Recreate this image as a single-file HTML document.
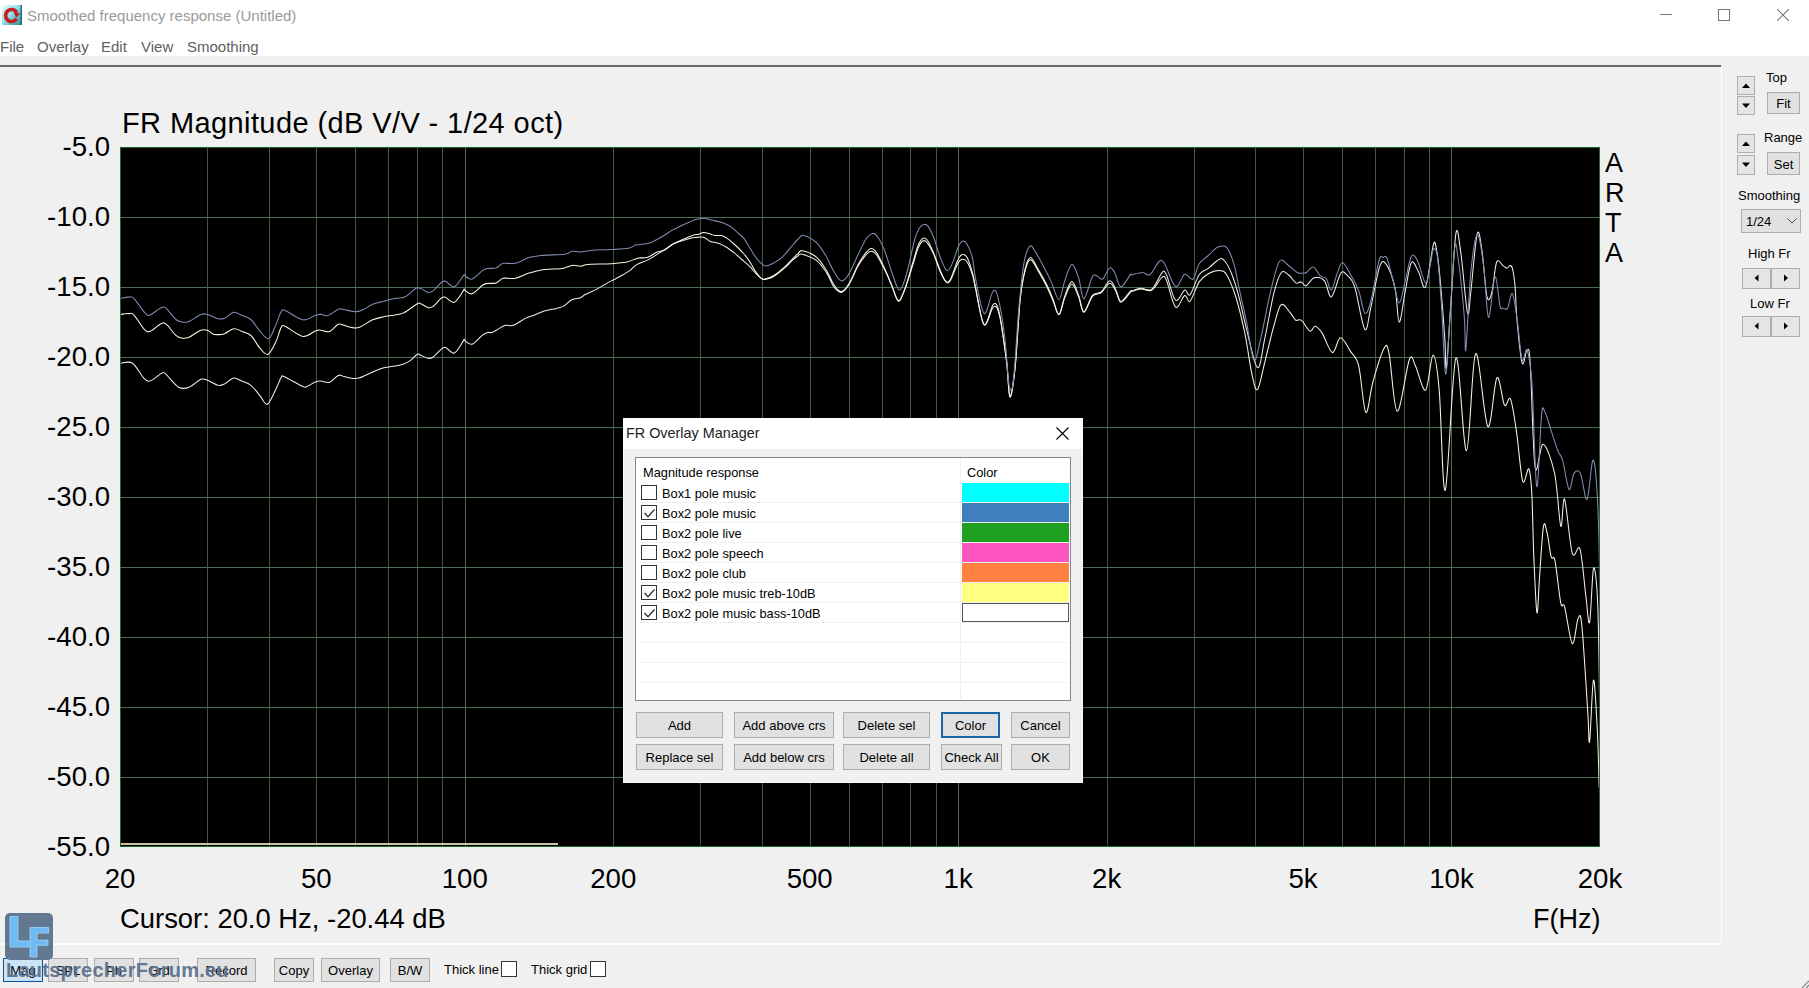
<!DOCTYPE html>
<html><head><meta charset="utf-8">
<style>
*{margin:0;padding:0}
html,body{width:1809px;height:988px;overflow:hidden;background:#f0f0f0;font-family:"Liberation Sans",sans-serif;position:relative}
.a{position:absolute;white-space:pre}
.yl{position:absolute;left:0;width:110px;text-align:right;font-size:27.6px;line-height:28px;color:#000}
.xl{position:absolute;top:865px;width:120px;text-align:center;font-size:27.6px;line-height:28px;color:#000}
.btn{position:absolute;box-sizing:border-box;border:1px solid #adadad;background:#e1e1e1;font-size:13px;color:#000;text-align:center;padding-top:1px}
.cb{position:absolute;width:15px;height:15px;box-sizing:border-box;border:1px solid #333;background:#fff}
.rt{position:absolute;font-size:12.8px;line-height:20px;color:#000;white-space:pre;margin-top:1px}
.menu{position:absolute;top:38px;font-size:15px;line-height:18px;color:#606060}
.spin{position:absolute;box-sizing:border-box;border:1px solid #adadad;background:#e5e5e5;width:18px;height:19px}
.lbl{position:absolute;font-size:13px;line-height:15px;color:#000;white-space:pre}
</style></head><body>
<!-- title bar -->
<div style="position:absolute;left:0;top:0;width:1809px;height:56px;background:#fff"></div>
<svg style="position:absolute;left:2px;top:5px" width="20" height="20" viewBox="0 0 20 20">
<defs><linearGradient id="ig" x1="0" y1="0" x2="1" y2="1"><stop offset="0" stop-color="#f4ffff"/><stop offset="0.45" stop-color="#8fe0e8"/><stop offset="1" stop-color="#2a8c98"/></linearGradient></defs>
<rect x="0" y="0" width="20" height="20" fill="url(#ig)"/>
<rect x="18.5" y="0" width="1.5" height="20" fill="#1f6c78"/>
<path d="M14.6 7.2 A6 6 0 1 0 14.6 13.8" fill="none" stroke="#c81c22" stroke-width="3.6"/>
<path d="M11.5 6 L18 8.5 L14 13 Z" fill="#c81c22"/>
</svg>
<div class="a" style="left:27px;top:7px;font-size:15px;line-height:18px;color:#9a9a9a">Smoothed frequency response (Untitled)</div>
<div style="position:absolute;left:1660px;top:14px;width:12px;height:1px;background:#777"></div>
<div style="position:absolute;left:1718px;top:9px;width:12px;height:12px;box-sizing:border-box;border:1px solid #777"></div>
<svg style="position:absolute;left:1777px;top:9px" width="12" height="12"><path d="M0 0L12 12M12 0L0 12" stroke="#777" stroke-width="1.1"/></svg>
<div class="menu" style="left:0">File</div>
<div class="menu" style="left:37px">Overlay</div>
<div class="menu" style="left:101px">Edit</div>
<div class="menu" style="left:141px">View</div>
<div class="menu" style="left:187px">Smoothing</div>
<div style="position:absolute;left:0;top:65px;width:1721px;height:2px;background:#6a6a6a"></div>
<div style="position:absolute;left:1721px;top:67px;width:1px;height:878px;background:#fff"></div>

<!-- chart -->
<div class="a" style="left:122px;top:105.5px;font-size:29px;line-height:34px;color:#000;letter-spacing:0.4px">FR Magnitude (dB V/V - 1/24 oct)</div>
<div class="yl" style="top:133px">-5.0</div><div class="yl" style="top:203px">-10.0</div><div class="yl" style="top:273px">-15.0</div><div class="yl" style="top:343px">-20.0</div><div class="yl" style="top:413px">-25.0</div><div class="yl" style="top:483px">-30.0</div><div class="yl" style="top:553px">-35.0</div><div class="yl" style="top:623px">-40.0</div><div class="yl" style="top:693px">-45.0</div><div class="yl" style="top:763px">-50.0</div><div class="yl" style="top:833px">-55.0</div>
<div class="xl" style="left:60.0px">20</div><div class="xl" style="left:256.3px">50</div><div class="xl" style="left:404.8px">100</div><div class="xl" style="left:553.3px">200</div><div class="xl" style="left:749.7px">500</div><div class="xl" style="left:898.2px">1k</div><div class="xl" style="left:1046.7px">2k</div><div class="xl" style="left:1243.0px">5k</div><div class="xl" style="left:1391.5px">10k</div><div class="xl" style="left:1540.0px">20k</div>
<svg style="position:absolute;left:119px;top:146px" width="1482" height="702" viewBox="-1 -1 1482 702">
<defs><clipPath id="pc"><rect x="1" y="1" width="1478" height="698"/></clipPath></defs>
<rect x="-1" y="-1" width="1482" height="702" fill="#dcf8e2"/>
<rect x="0" y="0" width="1480" height="700" fill="#2e5a36"/>
<rect x="1" y="1" width="1478" height="698" fill="#000"/>
<g stroke="#2e5a36" stroke-width="1" shape-rendering="crispEdges"><line x1="87.5" y1="0" x2="87.5" y2="700" stroke="#3c5a42"/><line x1="149.5" y1="0" x2="149.5" y2="700" stroke="#3c5a42"/><line x1="196.5" y1="0" x2="196.5" y2="700" stroke="#3c5a42"/><line x1="235.5" y1="0" x2="235.5" y2="700" stroke="#3c5a42"/><line x1="268.5" y1="0" x2="268.5" y2="700" stroke="#3c5a42"/><line x1="297.5" y1="0" x2="297.5" y2="700" stroke="#3c5a42"/><line x1="322.5" y1="0" x2="322.5" y2="700" stroke="#3c5a42"/><line x1="345.5" y1="0" x2="345.5" y2="700" stroke="#4c6c52"/><line x1="493.5" y1="0" x2="493.5" y2="700" stroke="#3c5a42"/><line x1="580.5" y1="0" x2="580.5" y2="700" stroke="#3c5a42"/><line x1="642.5" y1="0" x2="642.5" y2="700" stroke="#3c5a42"/><line x1="690.5" y1="0" x2="690.5" y2="700" stroke="#3c5a42"/><line x1="729.5" y1="0" x2="729.5" y2="700" stroke="#3c5a42"/><line x1="762.5" y1="0" x2="762.5" y2="700" stroke="#3c5a42"/><line x1="790.5" y1="0" x2="790.5" y2="700" stroke="#3c5a42"/><line x1="816.5" y1="0" x2="816.5" y2="700" stroke="#3c5a42"/><line x1="838.5" y1="0" x2="838.5" y2="700" stroke="#4c6c52"/><line x1="987.5" y1="0" x2="987.5" y2="700" stroke="#3c5a42"/><line x1="1074.5" y1="0" x2="1074.5" y2="700" stroke="#3c5a42"/><line x1="1135.5" y1="0" x2="1135.5" y2="700" stroke="#3c5a42"/><line x1="1183.5" y1="0" x2="1183.5" y2="700" stroke="#3c5a42"/><line x1="1222.5" y1="0" x2="1222.5" y2="700" stroke="#3c5a42"/><line x1="1255.5" y1="0" x2="1255.5" y2="700" stroke="#3c5a42"/><line x1="1284.5" y1="0" x2="1284.5" y2="700" stroke="#3c5a42"/><line x1="1309.5" y1="0" x2="1309.5" y2="700" stroke="#3c5a42"/><line x1="1331.5" y1="0" x2="1331.5" y2="700" stroke="#4c6c52"/><line x1="0" y1="70.5" x2="1480" y2="70.5" stroke="#4a6c52"/><line x1="0" y1="140.5" x2="1480" y2="140.5" stroke="#4a6c52"/><line x1="0" y1="210.5" x2="1480" y2="210.5" stroke="#4a6c52"/><line x1="0" y1="280.5" x2="1480" y2="280.5" stroke="#4a6c52"/><line x1="0" y1="350.5" x2="1480" y2="350.5" stroke="#4a6c52"/><line x1="0" y1="420.5" x2="1480" y2="420.5" stroke="#4a6c52"/><line x1="0" y1="490.5" x2="1480" y2="490.5" stroke="#4a6c52"/><line x1="0" y1="560.5" x2="1480" y2="560.5" stroke="#4a6c52"/><line x1="0" y1="630.5" x2="1480" y2="630.5" stroke="#4a6c52"/></g>
<g clip-path="url(#pc)"><path d="M0 697H438" stroke="#c9c59f" stroke-width="2" fill="none"/><path d="M0.6 216.2C2.6 216.2 8.5 213.6 12.5 216.2C16.4 218.7 21.2 228.8 24.3 231.7C27.4 234.6 28.0 234.5 30.9 233.7C33.7 232.8 39.0 227.6 41.4 226.4C43.8 225.3 42.5 224.4 45.4 226.7C48.2 229.0 54.6 238.0 58.5 240.2C62.5 242.5 65.3 241.6 69.1 240.2C72.8 238.9 77.8 233.5 80.9 232.3C84.0 231.2 84.6 232.3 87.5 233.3C90.3 234.3 95.1 237.6 98.0 238.3C100.9 238.9 101.9 238.2 104.6 236.9C107.2 235.7 110.9 231.5 113.8 231.0C116.6 230.5 118.8 232.8 121.7 234.1C124.5 235.3 127.8 235.8 130.9 238.3C134.0 240.7 137.4 245.6 140.1 248.8C142.8 252.0 144.7 258.4 147.3 257.3C150.0 256.2 153.6 246.7 155.9 242.2C158.2 237.7 159.7 232.5 161.2 230.4C162.6 228.3 160.8 228.2 164.4 229.7C168.1 231.2 179.1 238.0 182.9 239.6C186.7 241.2 185.1 240.1 187.2 239.3C189.4 238.5 193.5 235.6 195.8 234.8C198.1 233.9 198.7 234.0 201.0 234.1C203.3 234.2 206.7 236.2 209.6 235.3C212.4 234.4 215.9 229.4 218.2 228.4C220.5 227.4 221.3 228.8 223.3 229.3C225.4 229.7 227.6 230.7 230.2 231.0C232.8 231.3 235.1 232.0 238.8 231.0C242.6 230.0 248.6 226.6 252.6 225.0C256.6 223.3 259.5 222.0 262.9 221.0C266.4 220.1 269.8 220.0 273.3 219.3C276.7 218.6 280.7 217.9 283.6 216.9C286.4 215.9 288.2 215.0 290.5 213.4C292.8 211.8 295.6 208.1 297.3 207.2C299.1 206.4 299.1 207.6 300.8 208.3C302.5 208.9 305.7 210.9 307.7 211.2C309.7 211.5 310.5 211.9 312.8 210.3C315.1 208.8 319.3 203.7 321.4 202.1C323.6 200.4 323.6 199.7 325.7 200.4C327.9 201.0 331.3 207.2 334.3 206.0C337.4 204.8 342.1 195.3 343.8 193.1C345.5 191.0 342.9 192.6 344.3 193.3C345.7 193.9 349.0 198.1 352.0 197.2C355.1 196.3 359.8 190.0 362.4 188.1C365.0 186.1 365.8 186.0 367.5 185.5C369.3 185.0 369.8 186.3 372.7 185.2C375.6 184.0 381.3 179.8 384.7 178.6C388.2 177.5 389.9 179.5 393.3 178.3C396.8 177.1 402.0 173.1 405.4 171.4C408.8 169.7 410.8 169.5 414.0 168.3C417.2 167.1 420.6 165.1 424.3 164.0C428.1 162.8 433.2 162.2 436.4 161.4C439.5 160.6 440.7 160.8 443.3 159.4C445.8 157.9 449.0 154.2 451.9 152.8C454.7 151.4 458.2 151.7 460.5 150.7C462.8 149.8 462.8 148.8 465.6 147.3C468.5 145.8 473.9 143.6 477.7 141.6C481.4 139.7 485.1 137.2 488.0 135.6C490.9 134.0 491.4 134.0 494.9 132.2C498.3 130.3 505.0 126.8 508.6 124.4C512.3 122.0 513.5 119.5 516.7 117.6C519.9 115.7 524.5 114.6 527.8 112.9C531.2 111.2 533.7 109.4 536.7 107.6C539.7 105.7 543.0 103.7 545.6 102.0C548.2 100.3 550.1 98.8 552.3 97.5C554.5 96.3 556.4 95.7 559.0 94.8C561.6 93.8 565.3 92.7 567.9 92.0C570.5 91.3 572.0 90.9 574.6 90.6C577.2 90.4 580.9 89.7 583.5 90.3C586.1 90.9 587.6 93.4 590.2 94.4C592.7 95.5 596.5 95.5 599.1 96.4C601.7 97.3 603.1 98.1 605.7 99.8C608.3 101.4 612.0 104.2 614.6 106.2C617.2 108.3 618.7 109.8 621.3 112.0C623.9 114.3 627.8 117.4 630.2 119.8C632.6 122.2 633.8 124.5 635.8 126.5C637.8 128.5 640.6 131.1 642.5 132.1C644.3 133.0 644.9 132.6 646.9 132.1C649.0 131.5 651.6 130.8 654.7 128.7C657.9 126.7 663.1 122.2 665.8 119.8C668.6 117.4 669.4 116.1 671.4 114.2C673.5 112.4 676.2 109.8 678.1 108.7C680.0 107.5 679.4 106.5 682.5 107.3C685.6 108.2 692.7 110.6 696.7 113.7C700.7 116.8 703.9 121.7 706.7 125.9C709.5 130.2 711.4 136.1 713.4 139.3C715.4 142.4 717.3 144.0 719.0 144.8C720.6 145.7 721.6 145.9 723.4 144.3C725.3 142.7 727.7 139.6 730.1 135.4C732.5 131.2 735.3 123.8 737.9 119.2C740.5 114.7 743.5 110.6 745.7 108.1C747.9 105.6 749.4 104.2 751.2 104.2C753.1 104.2 754.6 105.1 756.8 108.1C759.0 111.2 762.2 117.7 764.6 122.6C767.0 127.5 769.2 132.7 771.3 137.6C773.3 142.5 775.4 149.5 776.8 152.1C778.3 154.6 778.7 154.9 780.2 152.9C781.7 150.8 783.7 145.4 785.8 139.8C787.8 134.2 790.4 125.6 792.4 119.2C794.5 112.8 796.3 105.6 798.0 101.4C799.7 97.3 801.0 95.2 802.5 94.2C803.9 93.2 805.1 93.2 806.9 95.3C808.8 97.4 811.4 102.1 813.6 107.0C815.8 111.9 818.2 120.2 820.3 124.8C822.3 129.4 824.2 133.1 825.8 134.6C827.5 136.1 828.2 136.8 830.3 133.7C832.3 130.6 836.0 119.5 838.1 115.9C840.1 112.3 841.0 112.5 842.5 112.3C844.0 112.2 845.3 112.2 847.0 114.8C848.7 117.4 851.1 123.7 852.5 128.2C854.0 132.6 853.6 133.3 855.5 141.5C857.4 149.8 861.1 174.6 864.1 177.6C867.1 180.7 871.0 161.0 873.6 159.6C876.1 158.1 877.4 160.0 879.6 169.0C881.7 178.1 884.7 200.3 886.5 213.8C888.2 227.3 888.5 248.8 889.9 249.9C891.3 251.1 893.3 237.0 895.1 220.7C896.8 204.3 898.5 168.5 900.2 151.8C902.0 135.2 903.7 127.7 905.4 120.9C907.1 114.0 908.5 110.5 910.6 110.5C912.6 110.5 914.9 116.6 917.4 120.9C920.0 125.2 923.5 131.2 926.0 136.3C928.6 141.5 930.8 146.7 932.9 151.8C935.1 157.0 936.9 167.9 939.0 167.3C941.0 166.7 942.8 153.8 945.0 148.4C947.1 142.9 949.6 134.6 951.9 134.6C954.2 134.6 956.7 143.4 958.7 148.4C960.7 153.4 961.6 164.7 963.9 164.7C966.2 164.7 969.6 151.7 972.5 148.4C975.4 145.1 978.2 147.4 981.1 145.0C984.0 142.5 987.3 134.2 989.7 133.8C992.2 133.3 993.9 138.9 995.7 142.4C997.6 145.8 998.5 154.1 1000.9 154.4C1003.3 154.7 1008.5 145.8 1010.4 144.1C1012.2 142.4 1010.1 144.5 1011.8 144.1C1013.6 143.6 1017.6 141.6 1020.9 141.3C1024.3 141.0 1028.4 144.8 1031.9 142.2C1035.4 139.6 1039.5 128.3 1041.9 125.8C1044.3 123.4 1044.2 123.1 1046.4 127.7C1048.7 132.2 1052.5 150.6 1055.5 153.2C1058.6 155.7 1062.2 144.1 1064.7 143.1C1067.1 142.2 1067.7 150.3 1070.1 147.7C1072.5 145.1 1076.2 132.1 1079.2 127.7C1082.3 123.3 1085.0 123.9 1088.3 121.3C1091.7 118.7 1096.5 113.4 1099.3 112.2C1102.0 111.0 1102.6 111.4 1104.7 114.0C1106.9 116.6 1109.6 121.4 1112.0 127.7C1114.5 133.9 1116.9 142.2 1119.3 151.3C1121.7 160.4 1123.6 170.8 1126.6 182.3C1129.6 193.8 1134.5 219.0 1137.5 220.6C1140.6 222.1 1142.1 203.9 1144.8 191.4C1147.5 179.0 1151.2 156.8 1153.9 145.9C1156.7 134.9 1158.8 128.9 1161.2 125.8C1163.6 122.8 1166.1 126.0 1168.5 127.7C1170.9 129.3 1173.7 134.6 1175.8 135.9C1177.9 137.1 1179.5 134.5 1181.3 134.9C1183.0 135.4 1183.9 139.5 1186.1 138.8C1188.2 138.1 1191.1 131.5 1194.2 130.7C1197.2 129.9 1201.4 130.5 1204.3 133.7C1207.2 136.9 1208.7 151.1 1211.4 149.9C1214.1 148.8 1218.0 130.4 1220.5 126.7C1223.0 122.9 1224.2 125.5 1226.6 127.7C1228.9 129.9 1231.6 130.7 1234.7 139.8C1237.7 148.9 1242.1 179.0 1244.8 182.3C1247.5 185.7 1248.3 170.7 1250.9 160.1C1253.4 149.4 1257.3 125.5 1260.0 118.6C1262.7 111.6 1264.5 114.7 1267.1 118.6C1269.6 122.4 1273.1 132.4 1275.2 141.8C1277.2 151.3 1277.5 174.9 1279.2 175.2C1280.9 175.6 1283.3 153.8 1285.3 143.9C1287.3 133.9 1289.2 118.7 1291.4 115.5C1293.6 112.3 1296.1 120.6 1298.4 124.6C1300.8 128.7 1303.0 144.3 1305.5 139.8C1308.0 135.3 1311.6 103.4 1313.4 97.4C1315.3 91.4 1315.6 98.5 1316.7 103.9C1317.8 109.3 1318.6 115.2 1319.9 129.8C1321.3 144.4 1323.7 176.2 1324.8 191.4C1325.9 206.5 1325.3 227.3 1326.4 220.5C1327.5 213.8 1329.6 173.4 1331.3 150.9C1332.9 128.3 1334.5 92.6 1336.1 85.3C1337.7 78.0 1339.1 93.8 1341.0 107.1C1342.9 120.5 1345.8 159.0 1347.4 165.4C1349.1 171.9 1349.1 159.1 1350.7 146.0C1352.3 132.9 1355.3 93.9 1357.2 86.9C1359.1 79.9 1360.4 93.5 1362.0 103.9C1363.6 114.3 1365.3 142.2 1366.9 149.3C1368.5 156.3 1370.1 151.7 1371.7 146.0C1373.4 140.3 1374.7 119.8 1376.6 115.2C1378.5 110.7 1381.2 117.6 1382.9 118.6C1384.6 119.6 1385.7 121.1 1386.9 121.1C1388.1 121.1 1389.1 118.5 1390.0 118.6C1390.9 118.7 1391.7 118.2 1392.5 121.6C1393.3 125.0 1394.2 130.2 1395.0 138.8C1395.8 147.4 1395.8 160.1 1397.0 173.0C1398.2 185.9 1400.5 211.1 1402.1 216.2C1403.8 221.2 1405.7 203.2 1407.0 203.2C1408.4 203.2 1408.9 196.7 1410.2 216.2C1411.6 235.6 1412.9 306.4 1415.1 319.9C1417.3 333.4 1420.0 296.1 1423.2 297.2C1426.5 298.3 1431.6 312.7 1434.6 326.4C1437.5 340.0 1439.1 374.8 1440.8 379.2C1442.4 383.5 1442.7 347.7 1444.6 352.2C1446.5 356.7 1449.7 397.7 1452.3 406.1C1454.9 414.4 1457.8 395.2 1460.0 402.2C1462.2 409.3 1464.2 436.2 1465.8 448.4C1467.4 460.6 1468.3 479.8 1469.6 475.3C1470.9 470.8 1472.2 425.9 1473.5 421.5C1474.7 417.0 1476.3 431.1 1477.3 448.4C1478.3 465.7 1478.8 495.8 1479.2 525.3C1479.7 554.8 1479.9 608.6 1480.0 625.3" stroke="#eeeeee" stroke-width="1.05" fill="none"/><path d="M0.6 167.5C1.9 167.3 6.3 166.5 8.5 166.6C10.7 166.6 11.2 165.2 13.8 167.9C16.4 170.5 21.6 179.6 24.3 182.3C27.1 185.1 27.4 185.3 30.2 184.3C33.1 183.3 38.7 177.5 41.4 176.4C44.2 175.3 44.3 175.8 46.7 177.7C49.1 179.7 53.3 186.0 55.9 188.3C58.5 190.5 60.3 190.8 62.5 191.2C64.7 191.5 66.0 191.6 69.1 190.2C72.1 188.9 77.8 184.4 80.9 183.3C84.0 182.1 85.5 182.6 87.5 183.3C89.4 183.9 91.0 186.2 92.7 186.9C94.5 187.7 96.0 187.6 98.0 187.6C100.0 187.6 101.9 187.7 104.6 186.7C107.2 185.7 110.9 182.1 113.8 181.7C116.6 181.3 118.8 183.2 121.7 184.3C124.5 185.5 127.8 185.7 130.9 188.5C134.0 191.4 137.3 198.3 140.1 201.4C143.0 204.6 145.4 208.4 148.0 207.3C150.6 206.2 153.7 199.3 155.9 194.8C158.1 190.3 159.6 183.0 161.2 180.4C162.7 177.8 161.5 177.8 165.1 179.3C168.7 180.8 177.8 188.6 182.9 189.4C188.0 190.1 192.8 184.7 195.8 183.7C198.8 182.6 198.7 183.0 201.0 183.2C203.3 183.3 206.7 185.5 209.6 184.5C212.4 183.6 215.9 178.4 218.2 177.3C220.5 176.2 221.3 177.5 223.3 178.0C225.4 178.5 227.6 179.8 230.2 180.2C232.8 180.7 235.1 181.8 238.8 180.6C242.6 179.3 248.6 174.6 252.6 172.8C256.6 171.1 259.5 170.7 262.9 169.9C266.4 169.1 269.8 168.8 273.3 168.2C276.7 167.5 279.6 167.9 283.6 165.9C287.6 164.0 294.5 158.2 297.3 156.7C300.2 155.1 299.1 156.0 300.8 156.7C302.5 157.3 305.7 160.0 307.7 160.4C309.7 160.9 310.5 161.2 312.8 159.6C315.1 158.0 319.3 152.5 321.4 151.0C323.6 149.5 323.6 149.7 325.7 150.5C327.9 151.2 331.3 156.5 334.3 155.3C337.4 154.1 342.1 145.3 343.8 143.2C345.5 141.2 342.9 142.2 344.3 142.8C345.7 143.4 349.0 147.6 352.0 146.8C355.1 146.0 359.8 139.9 362.4 138.2C365.0 136.5 365.2 136.8 367.5 136.5C369.8 136.1 373.6 136.8 376.1 135.9C378.7 135.1 379.9 132.1 383.0 131.3C386.2 130.5 390.8 132.2 395.1 131.3C399.4 130.4 404.2 127.6 408.8 126.1C413.4 124.7 417.2 123.5 422.6 122.7C428.1 121.9 436.7 122.2 441.5 121.5C446.4 120.8 448.7 118.8 451.9 118.4C455.0 118.0 457.9 119.4 460.5 119.3C463.0 119.1 462.2 118.0 467.3 117.5C472.5 117.1 484.8 117.1 491.4 116.7C498.0 116.2 502.9 115.8 506.9 115.0C510.9 114.1 513.5 112.5 515.5 111.9C517.5 111.2 516.9 111.2 518.9 110.9C521.0 110.7 524.8 111.3 527.8 110.3C530.8 109.4 533.9 106.5 536.7 105.3C539.5 104.1 541.9 104.4 544.5 103.1C547.1 101.8 549.9 99.0 552.3 97.5C554.7 96.1 556.4 95.4 559.0 94.2C561.6 93.0 565.3 91.4 567.9 90.3C570.5 89.2 572.7 88.3 574.6 87.8C576.4 87.3 577.5 87.7 579.0 87.3C580.5 86.9 581.6 85.6 583.5 85.5C585.3 85.5 588.3 86.5 590.2 87.0C592.0 87.5 592.7 88.1 594.6 88.4C596.5 88.7 599.2 88.2 601.3 88.6C603.3 89.1 604.6 89.6 606.8 91.1C609.1 92.6 611.9 95.0 614.6 97.5C617.4 100.1 621.0 103.5 623.5 106.5C626.1 109.4 628.4 112.6 630.2 115.4C632.1 118.1 632.8 120.5 634.7 123.2C636.5 125.8 639.3 130.1 641.4 131.5C643.4 132.9 644.9 132.0 646.9 131.5C649.0 131.0 650.8 130.5 653.6 128.7C656.4 127.0 660.7 123.5 663.6 120.9C666.6 118.3 669.0 115.5 671.4 113.1C673.8 110.7 676.2 108.0 678.1 106.5C680.0 104.9 679.4 103.0 682.5 103.7C685.6 104.3 692.7 107.0 696.7 110.3C700.7 113.7 703.9 119.2 706.7 123.7C709.5 128.2 711.4 133.7 713.4 137.1C715.4 140.4 717.3 142.6 719.0 143.7C720.6 144.8 721.6 145.2 723.4 143.7C725.3 142.3 727.7 139.1 730.1 134.8C732.5 130.6 735.3 123.0 737.9 118.1C740.5 113.3 743.5 108.7 745.7 105.9C747.9 103.1 749.4 101.4 751.2 101.4C753.1 101.4 754.6 102.5 756.8 105.9C759.0 109.2 762.2 116.3 764.6 121.5C767.0 126.7 769.2 132.0 771.3 137.1C773.3 142.1 775.4 148.9 776.8 151.5C778.3 154.1 778.7 154.7 780.2 152.6C781.7 150.6 783.7 145.2 785.8 139.3C787.8 133.3 790.4 123.8 792.4 117.0C794.5 110.2 796.3 102.9 798.0 98.7C799.7 94.4 801.0 92.7 802.5 91.6C803.9 90.6 805.1 90.2 806.9 92.5C808.8 94.9 811.4 100.7 813.6 105.9C815.8 111.1 818.2 119.0 820.3 123.7C822.3 128.4 824.2 132.8 825.8 134.3C827.5 135.8 828.2 136.2 830.3 132.6C832.3 129.0 836.0 116.7 838.1 112.6C840.1 108.4 841.0 107.9 842.5 107.6C844.0 107.2 845.3 107.3 847.0 110.3C848.7 113.4 851.1 121.0 852.5 125.9C854.0 130.8 853.6 131.2 855.5 139.8C857.4 148.4 861.1 174.8 864.1 177.6C867.1 180.5 871.0 158.7 873.6 157.0C876.1 155.3 877.4 157.9 879.6 167.3C881.7 176.8 884.7 200.0 886.5 213.8C888.2 227.6 888.5 248.8 889.9 249.9C891.3 251.1 893.3 237.0 895.1 220.7C896.8 204.3 898.5 168.2 900.2 151.8C902.0 135.5 903.7 129.1 905.4 122.6C907.1 116.0 908.5 112.6 910.6 112.6C912.6 112.6 914.9 118.3 917.4 122.6C920.0 126.8 923.5 132.9 926.0 138.1C928.6 143.2 930.8 148.6 932.9 153.6C935.1 158.5 936.9 168.2 939.0 167.7C941.0 167.1 942.8 155.2 945.0 150.1C947.1 145.0 949.6 137.2 951.9 137.2C954.2 137.2 956.7 145.4 958.7 150.1C960.7 154.8 961.6 165.4 963.9 165.3C966.2 165.1 969.6 152.5 972.5 149.3C975.4 146.0 978.2 148.0 981.1 145.8C984.0 143.7 987.3 136.6 989.7 136.3C992.2 136.1 993.9 140.9 995.7 144.1C997.6 147.2 998.5 155.1 1000.9 155.3C1003.3 155.5 1008.5 147.1 1010.4 145.3C1012.2 143.5 1010.1 145.0 1011.8 144.4C1013.6 143.8 1017.6 142.1 1020.9 141.9C1024.3 141.7 1028.4 145.1 1031.9 143.1C1035.4 141.2 1039.5 132.1 1041.9 130.4C1044.3 128.7 1044.2 128.2 1046.4 133.1C1048.7 138.1 1052.5 157.5 1055.5 160.1C1058.6 162.7 1062.2 149.6 1064.7 148.6C1067.1 147.6 1067.7 156.3 1070.1 154.1C1072.5 151.8 1076.2 139.5 1079.2 134.9C1082.3 130.4 1085.0 128.6 1088.3 126.7C1091.7 124.9 1096.2 123.5 1099.3 123.6C1102.3 123.8 1103.8 123.3 1106.6 127.7C1109.3 132.0 1112.6 139.8 1115.7 149.5C1118.7 159.2 1122.0 172.9 1124.8 186.0C1127.5 199.0 1129.9 218.4 1132.1 227.9C1134.2 237.3 1135.4 244.6 1137.5 242.4C1139.7 240.3 1142.1 225.7 1144.8 215.1C1147.5 204.5 1151.2 188.2 1153.9 178.7C1156.7 169.1 1158.5 159.8 1161.2 157.7C1163.9 155.6 1167.9 163.3 1170.3 165.9C1172.7 168.5 1174.0 172.0 1175.8 173.2C1177.6 174.4 1178.9 171.4 1181.3 173.2C1183.6 175.0 1187.7 183.1 1190.0 184.1C1192.3 185.1 1193.1 178.9 1195.2 179.3C1197.2 179.7 1199.4 182.0 1202.3 186.4C1205.1 190.8 1209.4 204.9 1212.4 205.6C1215.4 206.4 1217.5 191.0 1220.5 190.8C1223.5 190.7 1227.6 199.9 1230.6 204.6C1233.7 209.3 1236.2 208.7 1238.7 218.8C1241.2 228.9 1243.4 262.6 1245.8 265.3C1248.2 268.0 1249.9 245.6 1252.9 235.0C1255.9 224.3 1261.3 206.3 1264.0 201.6C1266.7 196.8 1266.9 196.2 1269.1 206.6C1271.3 217.1 1273.8 263.3 1277.2 264.3C1280.6 265.3 1286.3 220.3 1289.3 212.7C1292.4 205.1 1292.7 213.7 1295.4 218.8C1298.1 223.8 1302.6 244.9 1305.5 243.1C1308.5 241.3 1310.8 208.1 1313.1 208.1C1315.4 208.1 1317.2 220.5 1319.2 243.0C1321.2 265.5 1322.5 348.5 1325.3 343.2C1328.1 337.9 1332.4 217.7 1335.9 211.1C1339.4 204.6 1343.2 304.5 1346.5 303.7C1349.8 303.0 1352.1 210.6 1355.6 206.6C1359.2 202.5 1364.2 275.4 1367.8 279.4C1371.3 283.5 1374.1 234.4 1376.9 230.9C1379.7 227.3 1382.2 254.6 1384.5 258.2C1386.7 261.7 1388.5 247.6 1390.5 252.1C1392.6 256.7 1394.6 271.8 1396.6 285.5C1398.6 299.2 1400.7 328.0 1402.7 334.1C1404.7 340.2 1407.2 319.9 1408.8 321.9C1410.3 324.0 1410.9 331.6 1411.8 346.2C1412.6 360.9 1413.0 390.0 1413.8 409.9C1414.7 429.8 1416.0 462.5 1416.9 465.7C1417.9 468.9 1418.5 443.6 1419.6 429.2C1420.7 414.7 1422.2 386.2 1423.5 379.2C1424.7 372.1 1426.0 381.7 1427.3 386.8C1428.6 392.0 1429.9 405.4 1431.2 409.9C1432.4 414.4 1433.4 406.1 1435.0 413.8C1436.6 421.5 1439.2 448.4 1440.8 456.1C1442.4 463.8 1442.7 453.2 1444.6 459.9C1446.5 466.7 1450.1 494.5 1452.3 496.5C1454.6 498.4 1456.5 474.3 1458.1 471.5C1459.7 468.6 1460.3 463.8 1461.9 479.2C1463.5 494.5 1466.4 544.5 1467.7 563.8C1469.0 583.0 1468.7 599.7 1469.6 594.5C1470.6 589.4 1472.2 534.9 1473.5 533.0C1474.7 531.1 1476.3 565.1 1477.3 583.0C1478.3 600.9 1478.9 631.1 1479.2 640.7" stroke="#f8f6e0" stroke-width="1.05" fill="none"/><path d="M0.6 151.4C1.9 151.2 6.3 150.1 8.5 150.1C10.7 150.1 10.9 148.7 13.8 151.4C16.6 154.2 22.9 163.8 25.6 166.6C28.4 169.3 27.6 168.9 30.2 167.9C32.9 166.8 38.7 161.4 41.4 160.4C44.2 159.4 44.3 159.9 46.7 161.9C49.1 164.0 53.3 170.3 55.9 172.5C58.5 174.7 60.3 174.8 62.5 175.1C64.7 175.4 66.0 175.7 69.1 174.4C72.1 173.2 77.8 168.6 80.9 167.5C84.0 166.3 84.6 166.7 87.5 167.5C90.3 168.2 95.1 171.2 98.0 171.8C100.9 172.4 101.9 172.3 104.6 171.2C107.2 170.1 110.9 165.7 113.8 165.2C116.6 164.8 118.8 167.1 121.7 168.3C124.5 169.5 127.8 169.8 130.9 172.5C134.0 175.1 137.1 181.1 140.1 184.3C143.1 187.5 146.0 192.6 148.7 191.6C151.3 190.5 153.8 182.2 155.9 177.7C158.0 173.2 159.6 166.9 161.2 164.6C162.7 162.2 161.5 162.2 165.1 163.5C168.7 164.9 177.8 172.1 182.9 172.8C188.0 173.6 192.8 169.1 195.8 168.2C198.8 167.3 199.0 167.3 201.0 167.3C203.0 167.4 205.0 169.4 207.9 168.5C210.7 167.7 215.6 163.2 218.2 162.2C220.8 161.2 220.5 162.1 223.3 162.5C226.2 162.9 232.2 164.7 235.4 164.7C238.5 164.8 239.4 164.3 242.3 163.0C245.1 161.8 249.2 158.8 252.6 157.3C256.0 155.9 259.5 155.3 262.9 154.4C266.4 153.5 269.5 152.6 273.3 151.8C277.0 151.1 281.6 151.5 285.3 149.8C289.0 148.0 293.0 142.9 295.6 141.5C298.2 140.1 298.8 140.9 300.8 141.5C302.8 142.1 305.7 144.9 307.7 145.3C309.7 145.7 310.5 145.7 312.8 144.1C315.1 142.5 319.3 137.1 321.4 135.5C323.6 133.9 323.6 133.6 325.7 134.3C327.9 135.0 331.3 140.8 334.3 139.8C337.4 138.8 342.1 130.0 343.8 128.1C345.5 126.2 342.9 127.7 344.3 128.4C345.7 129.1 349.0 133.0 352.0 132.2C355.1 131.4 359.8 125.3 362.4 123.6C365.0 121.8 365.2 121.9 367.5 121.5C369.8 121.1 373.6 121.8 376.1 121.0C378.7 120.1 379.9 117.1 383.0 116.3C386.2 115.6 390.8 117.3 395.1 116.3C399.4 115.4 404.5 112.0 408.8 110.6C413.1 109.3 414.9 109.0 420.9 108.4C426.9 107.8 439.8 107.9 445.0 107.2C450.1 106.5 449.3 104.7 451.9 104.3C454.4 103.9 457.0 105.1 460.5 105.0C463.9 104.8 467.3 103.7 472.5 103.2C477.7 102.8 485.4 102.9 491.4 102.6C497.5 102.2 504.6 101.9 508.6 101.2C512.7 100.4 513.6 98.7 515.5 98.1C517.4 97.5 517.8 97.9 520.0 97.5C522.3 97.2 526.0 97.1 528.9 96.2C531.9 95.3 535.0 93.4 537.8 92.0C540.6 90.5 543.2 89.0 545.6 87.5C548.0 86.0 549.7 84.5 552.3 83.1C554.9 81.6 558.4 80.1 561.2 78.8C564.0 77.5 566.8 76.3 569.0 75.3C571.2 74.3 572.2 73.5 574.6 72.8C577.0 72.1 580.7 71.1 583.5 71.2C586.3 71.2 588.7 72.5 591.3 73.1C593.9 73.7 596.6 74.1 599.1 74.7C601.5 75.4 603.5 75.9 605.7 77.0C608.0 78.0 610.2 79.2 612.4 80.8C614.6 82.5 617.2 85.3 619.1 87.0C621.0 88.6 621.9 88.7 623.5 90.9C625.2 93.0 627.3 96.8 629.1 99.8C631.0 102.7 632.8 106.1 634.7 108.7C636.5 111.3 638.4 113.6 640.2 115.4C642.1 117.1 643.4 119.0 645.8 119.0C648.2 119.0 651.9 116.9 654.7 115.4C657.5 113.8 659.9 112.2 662.5 109.8C665.1 107.4 667.7 103.9 670.3 100.9C672.9 97.9 675.9 94.1 678.1 92.0C680.3 89.9 680.6 87.8 683.7 88.4C686.8 89.1 692.9 92.2 696.7 95.9C700.5 99.5 703.9 105.7 706.7 110.3C709.5 115.0 711.2 119.9 713.4 123.7C715.6 127.5 718.2 131.7 720.1 133.2C721.9 134.6 722.9 134.0 724.5 132.6C726.2 131.2 727.9 128.9 730.1 124.8C732.3 120.7 735.3 113.5 737.9 108.1C740.5 102.7 743.3 96.1 745.7 92.5C748.1 88.9 750.3 86.8 752.4 86.4C754.4 86.0 755.9 87.4 757.9 90.3C760.0 93.2 762.4 98.1 764.6 103.7C766.8 109.2 769.1 117.4 771.3 123.7C773.5 130.0 776.1 138.9 778.0 141.5C779.8 144.1 780.7 142.6 782.4 139.3C784.1 135.9 785.9 129.3 788.0 121.5C790.0 113.7 792.8 99.2 794.7 92.5C796.5 85.8 797.6 83.9 799.1 81.4C800.6 78.9 802.1 77.9 803.6 77.5C805.1 77.1 806.3 77.0 808.0 79.2C809.7 81.3 811.5 85.1 813.6 90.3C815.6 95.5 818.0 104.8 820.3 110.3C822.5 115.9 824.9 122.8 826.9 123.7C829.0 124.6 830.7 119.8 832.5 115.9C834.4 112.0 836.4 103.9 838.1 100.3C839.7 96.7 841.0 94.8 842.5 94.2C844.0 93.6 845.3 94.1 847.0 97.0C848.7 99.9 851.1 105.8 852.5 111.5C854.0 117.2 853.6 122.0 855.5 131.2C857.4 140.4 861.2 164.2 864.1 166.5C867.0 168.8 870.4 147.7 872.7 145.0C875.0 142.2 875.9 142.7 877.9 150.1C879.9 157.6 882.9 175.1 884.7 189.7C886.6 204.3 887.6 230.4 889.0 237.9C890.5 245.3 891.8 246.5 893.3 234.4C894.9 222.4 896.8 185.1 898.5 165.6C900.2 146.1 901.8 128.5 903.7 117.4C905.5 106.4 907.7 101.4 909.7 99.3C911.7 97.3 913.3 101.8 915.7 105.4C918.2 109.0 921.7 116.0 924.3 120.9C926.9 125.7 928.8 129.3 931.2 134.6C933.6 139.9 936.7 153.0 939.0 152.7C941.2 152.4 942.8 138.8 945.0 132.9C947.1 127.0 949.6 117.7 951.9 117.4C954.2 117.1 956.7 125.4 958.7 131.2C960.7 136.9 961.6 152.1 963.9 151.8C966.2 151.5 970.2 133.2 972.5 129.5C974.8 125.7 975.9 129.0 977.7 129.5C979.4 129.9 980.8 133.5 982.8 132.0C984.8 130.6 987.7 121.9 989.7 120.9C991.7 119.9 993.0 122.9 994.9 126.0C996.7 129.2 998.3 139.5 1000.9 139.8C1003.5 140.1 1008.5 129.8 1010.4 127.7C1012.2 125.7 1009.8 128.0 1011.8 127.7C1013.9 127.3 1019.7 125.5 1022.8 125.5C1025.8 125.5 1027.3 129.5 1030.0 127.7C1032.8 125.8 1036.7 116.4 1039.1 114.5C1041.6 112.7 1041.9 112.6 1044.6 116.7C1047.3 120.9 1052.2 137.7 1055.5 139.5C1058.9 141.3 1061.8 128.5 1064.7 127.3C1067.5 126.1 1070.4 134.0 1072.9 132.2C1075.3 130.4 1076.6 120.7 1079.2 116.7C1081.8 112.8 1085.3 111.3 1088.3 108.5C1091.4 105.8 1094.4 101.7 1097.4 100.3C1100.5 99.0 1103.8 97.6 1106.6 100.3C1109.3 103.1 1111.7 109.7 1113.8 116.7C1116.0 123.7 1117.2 132.5 1119.3 142.2C1121.4 151.9 1124.2 163.2 1126.6 175.0C1129.0 186.9 1131.5 210.9 1133.9 213.3C1136.3 215.7 1138.4 200.8 1141.2 189.6C1143.9 178.4 1147.2 158.4 1150.3 145.9C1153.3 133.4 1156.4 119.1 1159.4 114.5C1162.4 110.0 1165.5 116.7 1168.5 118.5C1171.5 120.4 1174.9 124.6 1177.6 125.8C1180.3 127.0 1183.5 125.8 1184.9 125.8C1186.3 125.9 1184.7 127.0 1186.1 126.0C1187.5 125.1 1190.8 119.5 1193.2 120.0C1195.5 120.4 1198.1 126.7 1200.2 128.7C1202.4 130.6 1204.5 129.4 1206.3 131.7C1208.2 134.1 1209.5 143.9 1211.4 142.9C1213.2 141.8 1215.6 130.2 1217.5 125.6C1219.3 121.1 1220.3 115.2 1222.5 115.5C1224.7 115.9 1227.9 122.9 1230.6 127.7C1233.3 132.4 1236.4 137.5 1238.7 143.9C1241.1 150.3 1242.8 164.4 1244.8 166.1C1246.8 167.8 1248.5 162.8 1250.9 154.0C1253.2 145.2 1256.9 120.7 1259.0 113.5C1261.0 106.2 1261.7 110.8 1263.0 110.5C1264.4 110.1 1265.4 107.6 1267.1 111.5C1268.7 115.4 1271.1 126.3 1273.1 133.7C1275.2 141.2 1277.2 156.0 1279.2 156.0C1281.2 156.0 1283.3 141.5 1285.3 133.7C1287.3 126.0 1289.3 112.8 1291.4 109.4C1293.4 106.1 1295.1 109.1 1297.4 113.5C1299.8 117.9 1303.4 134.9 1305.5 135.8C1307.7 136.6 1308.9 124.1 1310.2 118.5C1311.5 112.9 1312.2 103.6 1313.4 102.3C1314.7 100.9 1316.1 100.9 1317.5 110.4C1318.8 119.8 1320.2 139.5 1321.5 159.0C1322.9 178.4 1324.2 224.3 1325.6 227.0C1326.9 229.7 1328.2 195.9 1329.6 175.2C1331.1 154.4 1333.1 113.4 1334.5 102.3C1335.8 91.2 1336.1 97.7 1337.7 108.8C1339.4 119.8 1342.9 153.0 1344.2 168.7C1345.6 184.3 1344.8 209.7 1345.8 202.7C1346.9 195.7 1348.8 145.7 1350.7 126.6C1352.6 107.4 1355.0 89.1 1357.2 87.7C1359.3 86.4 1361.8 104.7 1363.6 118.5C1365.5 132.3 1366.6 168.4 1368.5 170.3C1370.4 172.2 1373.1 131.7 1375.0 129.8C1376.9 127.9 1378.7 153.8 1380.0 159.0C1381.3 164.2 1381.4 160.7 1382.7 161.1C1383.9 161.4 1385.9 163.5 1387.6 161.1C1389.2 158.6 1390.8 144.3 1392.4 146.5C1394.0 148.6 1395.7 163.0 1397.3 174.0C1398.9 185.1 1400.5 208.1 1402.1 212.9C1403.8 217.8 1405.4 199.4 1407.0 203.2C1408.6 207.0 1410.2 212.9 1411.9 235.6C1413.5 258.3 1415.1 334.0 1416.7 339.4C1418.3 344.8 1420.2 280.5 1421.6 268.0C1422.9 255.6 1423.2 262.1 1424.8 264.8C1426.5 267.5 1429.2 277.8 1431.3 284.2C1433.5 290.7 1435.9 298.8 1437.8 303.7C1439.7 308.6 1440.8 306.9 1442.7 313.4C1444.5 319.9 1447.3 340.4 1449.1 342.6C1451.0 344.8 1452.1 329.1 1454.0 326.4C1455.9 323.7 1458.3 322.1 1460.5 326.4C1462.6 330.7 1464.9 354.5 1467.0 352.3C1469.0 350.2 1471.2 315.6 1472.8 313.4C1474.4 311.3 1475.6 322.7 1476.7 339.4C1477.8 356.0 1478.8 377.7 1479.3 413.3C1479.8 448.9 1479.5 529.7 1479.5 553.0" stroke="#838cb0" stroke-width="1.05" fill="none"/></g>
</svg>
<div class="a" style="left:1605px;top:148px;font-size:27px;line-height:30px;color:#000">A<br>R<br>T<br>A</div>
<div class="a" style="left:120px;top:904px;font-size:27.4px;line-height:30px;color:#000">Cursor: 20.0 Hz, -20.44 dB</div>
<div class="a" style="left:1533px;top:904px;font-size:27px;line-height:30px;color:#000">F(Hz)</div>

<!-- right panel -->
<div class="spin" style="left:1737px;top:76px"><svg width="16" height="17"><path d="M4 11h8l-4-4.5z" fill="#000"/></svg></div>
<div class="spin" style="left:1737px;top:96px"><svg width="16" height="17"><path d="M4 6.5h8l-4 4.5z" fill="#000"/></svg></div>
<div class="lbl" style="left:1766px;top:70px">Top</div>
<div class="btn" style="left:1767px;top:92px;width:33px;height:22px;line-height:20px">Fit</div>
<div class="spin" style="left:1737px;top:134px"><svg width="16" height="17"><path d="M4 11h8l-4-4.5z" fill="#000"/></svg></div>
<div class="spin" style="left:1737px;top:155px;height:20px"><svg width="16" height="17"><path d="M4 6.5h8l-4 4.5z" fill="#000"/></svg></div>
<div class="lbl" style="left:1764px;top:130px">Range</div>
<div class="btn" style="left:1767px;top:152px;width:33px;height:23px;line-height:21px">Set</div>
<div class="lbl" style="left:1738px;top:188px">Smoothing</div>
<div class="btn" style="left:1741px;top:209px;width:60px;height:24px;line-height:22px;text-align:left;padding-left:4px">1/24<svg style="position:absolute;left:45px;top:8px" width="10" height="6"><path d="M0.5 0.5L5 5L9.5 0.5" fill="none" stroke="#444" stroke-width="1"/></svg></div>
<div class="lbl" style="left:1748px;top:246px">High Fr</div>
<div class="spin" style="left:1742px;top:268px;width:29px;height:21px"><svg width="27" height="19"><path d="M15.5 5.5v7l-4-3.5z" fill="#000"/></svg></div>
<div class="spin" style="left:1771px;top:268px;width:29px;height:21px"><svg width="27" height="19"><path d="M12 5.5v7l4-3.5z" fill="#000"/></svg></div>
<div class="lbl" style="left:1750px;top:296px">Low Fr</div>
<div class="spin" style="left:1742px;top:316px;width:29px;height:21px"><svg width="27" height="19"><path d="M15.5 5.5v7l-4-3.5z" fill="#000"/></svg></div>
<div class="spin" style="left:1771px;top:316px;width:29px;height:21px"><svg width="27" height="19"><path d="M12 5.5v7l4-3.5z" fill="#000"/></svg></div>

<!-- bottom -->
<div style="position:absolute;left:0;top:943px;width:1722px;height:2px;background:#fcfcfc"></div>
<svg style="position:absolute;left:1799px;top:978px" width="10" height="10"><path d="M10 3L3 10M10 7L7 10" stroke="#8a8a8a" stroke-width="1.4"/><path d="M10 4.5L4.5 10" stroke="#fff" stroke-width="0.8"/></svg>
<div class="btn" style="left:3px;top:958px;width:40px;height:24px;line-height:22px;background:#cce4f7;border:1px solid #005499">Mag</div>
<div class="btn" style="left:48px;top:958px;width:40px;height:24px;line-height:22px">SPL</div>
<div class="btn" style="left:94px;top:958px;width:40px;height:24px;line-height:22px">Ph</div>
<div class="btn" style="left:139px;top:958px;width:40px;height:24px;line-height:22px">Grd</div>
<div class="btn" style="left:197px;top:958px;width:59px;height:24px;line-height:22px">Record</div>
<div class="btn" style="left:274px;top:958px;width:40px;height:24px;line-height:22px">Copy</div>
<div class="btn" style="left:321px;top:958px;width:59px;height:24px;line-height:22px">Overlay</div>
<div class="btn" style="left:390px;top:958px;width:40px;height:24px;line-height:22px">B/W</div>
<div class="lbl" style="left:444px;top:962px">Thick line</div>
<div class="cb" style="left:501px;top:961px;width:16px;height:16px"></div>
<div class="lbl" style="left:531px;top:962px">Thick grid</div>
<div class="cb" style="left:590px;top:961px;width:16px;height:16px"></div>
<!-- watermark -->
<div style="position:absolute;left:5px;top:913px;width:48px;height:47px;border-radius:5px;background:#637891"></div>
<svg style="position:absolute;left:5px;top:913px" width="48" height="47"><g fill="#6ebaf4" stroke="#a9d6f6" stroke-width="0.8"><path d="M5 3.5h8v24.5h11v6H5z"/><path d="M25 14.5h18.6v5.5H32v7.2h11v5.1H32V44h-7z"/></g></svg>
<div class="a" style="left:6px;top:958px;font-size:20px;line-height:24px;font-weight:bold;color:#5d7390;opacity:0.95;letter-spacing:0.25px">LautsprecherForum.eu</div>

<!-- dialog -->
<div style="position:absolute;left:623px;top:418px;width:460px;height:365px;background:#f0f0f0;box-sizing:border-box;border:1px solid #fafafa"></div>
<div style="position:absolute;left:623px;top:418px;width:460px;height:31px;background:#fff"></div>
<div class="a" style="left:626px;top:425px;font-size:14.4px;line-height:17px;color:#222">FR Overlay Manager</div>
<svg style="position:absolute;left:1056px;top:427px" width="13" height="13"><path d="M0.5 0.5L12.5 12.5M12.5 0.5L0.5 12.5" stroke="#000" stroke-width="1.1"/></svg>
<div style="position:absolute;left:635px;top:457px;width:436px;height:244px;box-sizing:border-box;border:1px solid #828790;background:#fff"></div>
<div style="position:absolute;left:960px;top:458px;width:1px;height:242px;background:#f0f0f0"></div>
<div class="rt" style="left:643px;top:462px">Magnitude response</div>
<div class="rt" style="left:967px;top:462px">Color</div>
<div class="cb" style="left:641px;top:485px;width:16px"></div><div class="rt" style="left:662px;top:483px">Box1 pole music</div><div style="position:absolute;left:962px;top:483px;width:107px;height:19px;background:#00ffff;"></div><div class="cb" style="left:641px;top:505px;width:16px"><svg width="15" height="15" style="position:absolute;left:0;top:0"><polyline points="2.5,7 6,10.8 12.5,3.5" fill="none" stroke="#333" stroke-width="1.3"/></svg></div><div class="rt" style="left:662px;top:503px">Box2 pole music</div><div style="position:absolute;left:962px;top:503px;width:107px;height:19px;background:#3f7fc0;"></div><div class="cb" style="left:641px;top:525px;width:16px"></div><div class="rt" style="left:662px;top:523px">Box2 pole live</div><div style="position:absolute;left:962px;top:523px;width:107px;height:19px;background:#20a020;"></div><div class="cb" style="left:641px;top:545px;width:16px"></div><div class="rt" style="left:662px;top:543px">Box2 pole speech</div><div style="position:absolute;left:962px;top:543px;width:107px;height:19px;background:#ff55c0;"></div><div class="cb" style="left:641px;top:565px;width:16px"></div><div class="rt" style="left:662px;top:563px">Box2 pole club</div><div style="position:absolute;left:962px;top:563px;width:107px;height:19px;background:#ff8040;"></div><div class="cb" style="left:641px;top:585px;width:16px"><svg width="15" height="15" style="position:absolute;left:0;top:0"><polyline points="2.5,7 6,10.8 12.5,3.5" fill="none" stroke="#333" stroke-width="1.3"/></svg></div><div class="rt" style="left:662px;top:583px">Box2 pole music treb-10dB</div><div style="position:absolute;left:962px;top:583px;width:107px;height:19px;background:#ffff80;"></div><div class="cb" style="left:641px;top:605px;width:16px"><svg width="15" height="15" style="position:absolute;left:0;top:0"><polyline points="2.5,7 6,10.8 12.5,3.5" fill="none" stroke="#333" stroke-width="1.3"/></svg></div><div class="rt" style="left:662px;top:603px">Box2 pole music bass-10dB</div><div style="position:absolute;left:962px;top:603px;width:107px;height:19px;background:#ffffff;border:1px solid #555;box-sizing:border-box;"></div><div style="position:absolute;left:637px;top:502px;width:432px;height:1px;background:#f0f0f0"></div><div style="position:absolute;left:637px;top:522px;width:432px;height:1px;background:#f0f0f0"></div><div style="position:absolute;left:637px;top:542px;width:432px;height:1px;background:#f0f0f0"></div><div style="position:absolute;left:637px;top:562px;width:432px;height:1px;background:#f0f0f0"></div><div style="position:absolute;left:637px;top:582px;width:432px;height:1px;background:#f0f0f0"></div><div style="position:absolute;left:637px;top:602px;width:432px;height:1px;background:#f0f0f0"></div><div style="position:absolute;left:637px;top:622px;width:432px;height:1px;background:#f0f0f0"></div><div style="position:absolute;left:637px;top:642px;width:432px;height:1px;background:#f0f0f0"></div><div style="position:absolute;left:637px;top:662px;width:432px;height:1px;background:#f0f0f0"></div><div style="position:absolute;left:637px;top:682px;width:432px;height:1px;background:#f0f0f0"></div><div style="position:absolute;left:637px;top:702px;width:432px;height:1px;background:#f0f0f0"></div>
<div class="btn" style="left:636px;top:712px;width:87px;height:26px;line-height:24px">Add</div>
<div class="btn" style="left:734px;top:712px;width:100px;height:26px;line-height:24px">Add above crs</div>
<div class="btn" style="left:843px;top:712px;width:87px;height:26px;line-height:24px">Delete sel</div>
<div class="btn" style="left:941px;top:712px;width:59px;height:26px;line-height:22px;border:2px solid #1d66a6">Color</div>
<div class="btn" style="left:1011px;top:712px;width:59px;height:26px;line-height:24px">Cancel</div>
<div class="btn" style="left:636px;top:744px;width:87px;height:26px;line-height:24px">Replace sel</div>
<div class="btn" style="left:734px;top:744px;width:100px;height:26px;line-height:24px">Add below crs</div>
<div class="btn" style="left:843px;top:744px;width:87px;height:26px;line-height:24px">Delete all</div>
<div class="btn" style="left:941px;top:744px;width:61px;height:26px;line-height:24px">Check All</div>
<div class="btn" style="left:1011px;top:744px;width:59px;height:26px;line-height:24px">OK</div>
</body></html>
